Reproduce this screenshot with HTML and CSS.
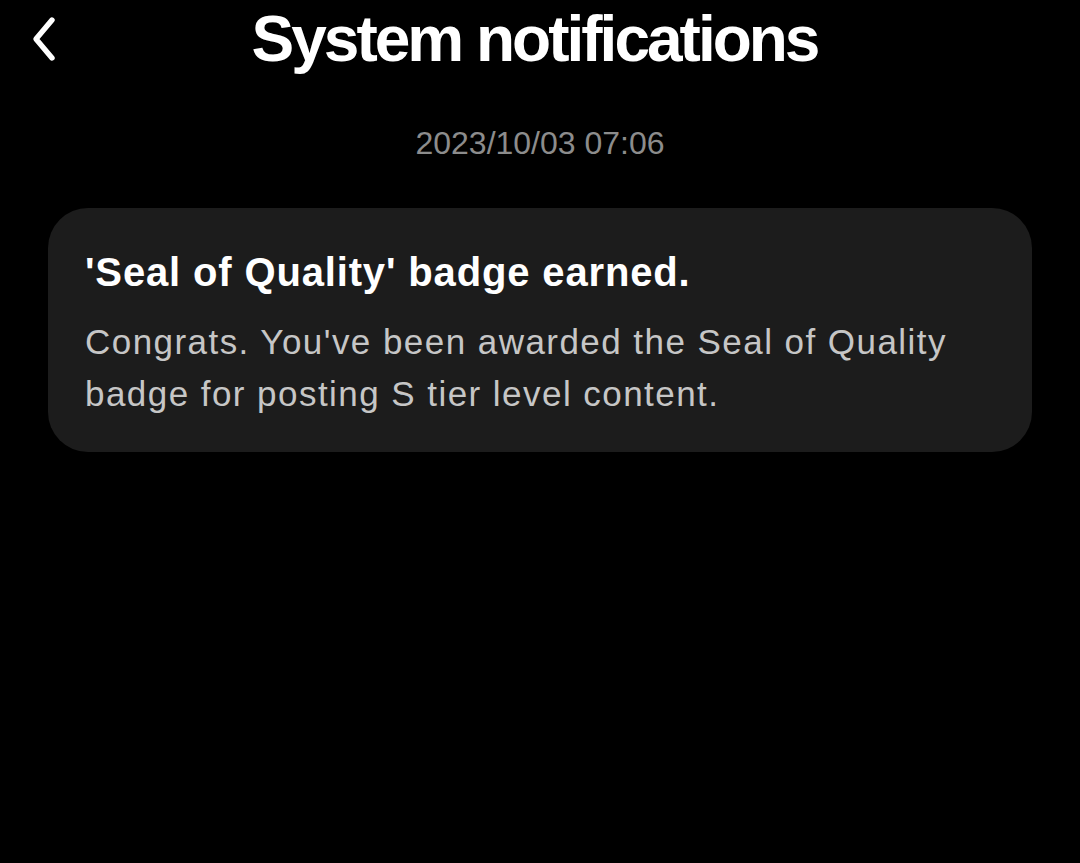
FILE: index.html
```html
<!DOCTYPE html>
<html lang="en">
<head>
    <meta charset="UTF-8">
    <meta name="viewport" content="width=device-width,initial-scale=1">
    <title>System notifications</title>
    <link rel="stylesheet" href="styles.css">
</head>
<body>
    <div class="header">
        <a class="back" href="#">
            <svg width="28" height="46" viewBox="0 0 28 46">
                <path d="M22 4 L6 23 L22 42" fill="none" stroke="#fff" stroke-width="5.4" stroke-linecap="round" stroke-linejoin="round"/>
            </svg>
        </a>
        <h1 class="title">System notifications</h1>
    </div>
    <div class="list">
        <p class="time">2023/10/03 07:06</p>
        <div class="card">
            <h2 class="cardTitle">'Seal of Quality' badge earned.</h2>
            <p class="cardText">Congrats. You've been awarded the Seal of Quality badge for posting S tier level content.</p>
        </div>
    </div>
</body>
</html>
```

FILE: styles.css
```css
* { margin: 0; padding: 0; box-sizing: border-box; }
html, body { height: 100%; }
body {
    background: #000;
    color: #fff;
    font-family: "Liberation Sans", Arial, sans-serif;
}
.header {
    position: relative;
    height: 82px;
    display: flex;
    align-items: center;
    justify-content: center;
}
.back {
    position: absolute;
    left: 30px;
    top: 16px;
    display: block;
}
.back svg { display: block; }
.title {
    font-size: 64px;
    font-weight: bold;
    letter-spacing: -3px;
    line-height: 1;
    margin-top: -4px;
    margin-left: -11px;
}
.list {
    padding: 42px 48px 0;
}
.time {
    text-align: center;
    font-size: 32px;
    color: #8c8c8c;
    line-height: 38px;
}
.card {
    margin-top: 46px;
    background: #1c1c1c;
    border-radius: 40px;
    padding: 40px 37px 32px;
}
.cardTitle {
    font-size: 40px;
    font-weight: bold;
    line-height: 48px;
    letter-spacing: 0.85px;
}
.cardText {
    margin-top: 20px;
    font-size: 35px;
    line-height: 52px;
    color: #c6c6c6;
    letter-spacing: 1.45px;
}
```
